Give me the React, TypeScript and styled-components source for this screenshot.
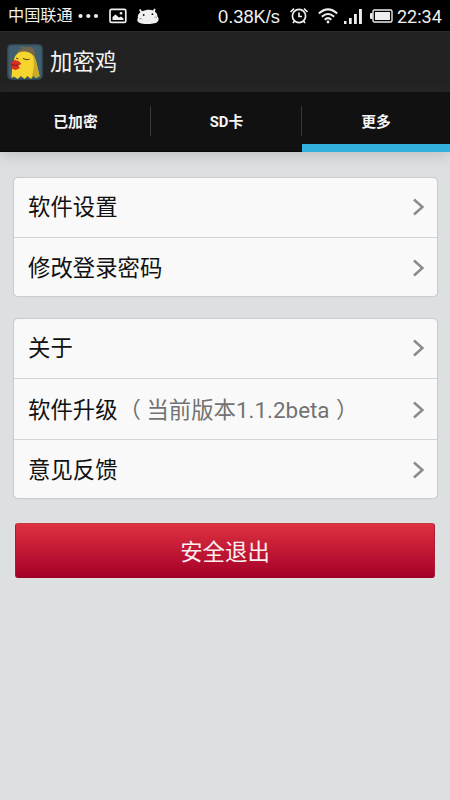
import React from "react";
import styled, { createGlobalStyle } from "styled-components";

const GlobalStyle = createGlobalStyle`
  * { box-sizing: border-box; }
  body {
    margin: 0;
    background: #dce0e1;
    font-family: Roboto, "Noto Sans CJK SC", sans-serif;
  }
`;

const Screen = styled.div`
  width: 450px;
  height: 800px;
  display: flex;
  flex-direction: column;
  background: #dce0e1;
  overflow: hidden;
`;

const StatusBar = styled.div`
  height: 31px;
  flex: none;
  display: flex;
  align-items: center;
  background: #000;
  color: #f0f0f0;
  padding: 1px 7px 0 8px;
`;

const Carrier = styled.span`
  font-size: 16.2px;
  line-height: 30px;
  white-space: nowrap;
  width: 69.5px;
`;

const StatusIcon = styled.svg<{ $gap: number }>`
  flex: none;
  display: block;
  margin-right: ${(p) => p.$gap}px;
`;

const Speed = styled.span`
  margin-left: auto;
  margin-right: 9px;
  font-family: "Liberation Sans", sans-serif;
  font-size: 18.3px;
  line-height: 30px;
  padding-top: 1px;
  white-space: nowrap;
`;

const Clock = styled.span`
  font-size: 18px;
  line-height: 30px;
  padding-top: 1px;
  width: 46px;
  white-space: nowrap;
`;

const TitleBar = styled.header`
  height: 61px;
  flex: none;
  display: flex;
  align-items: center;
  gap: 7px;
  padding-left: 7px;
  background: #222;
  border-top: 1px solid #2b2b2b;
`;

const Title = styled.h1`
  margin: 0;
  font-size: 22.4px;
  font-weight: 400;
  line-height: 30px;
  color: #f3f3f3;
`;

const TabBar = styled.nav`
  height: 60px;
  flex: none;
  display: grid;
  grid-template-columns: 151px 151px 148px;
  background: #111;
  border-bottom: 1px solid #08080a;
  box-shadow: 0 2px 14px rgba(90, 80, 90, 0.25);
`;

const Tab = styled.div<{ $active?: boolean }>`
  display: flex;
  align-items: center;
  justify-content: center;
  position: relative;
  height: ${(p) => (p.$active ? 60 : 59)}px;
  padding-top: ${(p) => (p.$active ? 5 : 0)}px;
  padding-bottom: ${(p) => (p.$active ? 0 : 2)}px;
  border-bottom: ${(p) => (p.$active ? "8px solid #33b0dc" : "none")};
  color: #f5f5f5;
  font-size: 14.8px;
  font-weight: 700;

  &:not(:last-child)::after {
    content: "";
    position: absolute;
    right: 0;
    top: 14px;
    width: 1px;
    height: 30px;
    background: #383838;
  }
`;

const Content = styled.main`
  display: flex;
  flex-direction: column;
  padding: 25px 12px 0 13px;
`;

const Card = styled.section`
  background: #f9f9f9;
  border: 1px solid #c9cdcf;
  border-radius: 5px;
  box-shadow: 0 0 1px #c5cacc;
  margin-bottom: 21px;
`;

const Row = styled.div<{ $height: number }>`
  height: ${(p) => p.$height}px;
  display: flex;
  align-items: center;
  justify-content: space-between;
  padding: 0 12px 0 14px;

  & + & {
    border-top: 1px solid #d2d5d7;
    padding-top: 2px;
  }

  &:first-child {
    padding-bottom: 1px;
  }
`;

const Label = styled.span`
  font-size: 22.4px;
  line-height: 32px;
  color: #111;
  white-space: nowrap;
`;

const Version = styled.span`
  color: #727272;
`;

const Paren = styled.span<{ $before: number; $after: number }>`
  margin-left: ${(p) => p.$before}px;
  margin-right: ${(p) => p.$after}px;
`;

const ExitButton = styled.button`
  margin: 3px 3px 0 2px;
  height: 55px;
  border: 1px solid #a81c35;
  border-top-color: #c23a48;
  border-bottom-color: #950026;
  border-radius: 3px;
  padding: 2px 0 0;
  background: linear-gradient(#de3140, #a50029);
  box-shadow: 0 0 1px 1px rgba(238, 222, 222, 0.6);
  color: #fbeff1;
  font-family: inherit;
  font-size: 22.4px;
  line-height: 32px;
`;

const Arrow = () => (
  <svg width="13" height="20" viewBox="0 0 13 20" fill="none">
    <path d="M2 2.5 L10.4 10 L2 17.5" stroke="#8b8b8b" strokeWidth="2.5" />
  </svg>
);

const DuckIcon = () => (
  <svg width="36" height="36" viewBox="0 0 36 36">
    <rect x="0.5" y="0.5" width="35" height="35" rx="4" fill="#40606f" />
    <rect x="1" y="1" width="34" height="34" rx="4" fill="none" stroke="#304a56" />
    <path d="M10 11 L11 6.5 L15 5 L13.5 1.5 L18 3.5 L24 3 L27.5 6.5 L28 13 L20 12 Z" fill="#77684a" />
    <path
      d="M7 16 C8 10 12 7 18 7.5 C25 8 28.5 13 29.5 19 L32.5 32 L29 34 L26.5 31.5 L24 35 L20.5 32 L17.5 35 L14 32 L10.5 35 L7 32.5 L4.5 34 L5 26 Z"
      fill="#f5d52e"
    />
    <path d="M26 12 C28.5 15 30 20 32.5 32 L29 34 L26.5 31.5 L24 35 C27 27 27.5 18 26 12Z" fill="#c9ab28" />
    <path d="M16 14.3 Q19 16.5 22.5 15 M9 14 L11.5 15" fill="none" stroke="#6b5319" strokeWidth="1.3" />
    <path d="M7 16 L11.5 17 L14.5 20 L11 21.5 L13 24 L8.5 26 L3.5 24 L6 21.5 L2.5 20.5 Z" fill="#d92c23" />
    <path d="M4 21 L11.5 21.3" fill="none" stroke="#73221b" strokeWidth="1" />
  </svg>
);

const groups: { label: string; version?: string; height: number }[][] = [
  [
    { label: "软件设置", height: 59 },
    { label: "修改登录密码", height: 59 },
  ],
  [
    { label: "关于", height: 59 },
    { label: "软件升级", version: "1.1.2beta", height: 61 },
    { label: "意见反馈", height: 59 },
  ],
];

export default function App() {
  return (
    <Screen>
      <GlobalStyle />
      <StatusBar>
        <Carrier>中国联通</Carrier>
        <StatusIcon $gap={10} width="21" height="6" viewBox="0 0 21 6" fill="#eee">
          <circle cx="2.5" cy="3" r="2.1" />
          <circle cx="10.3" cy="3" r="2.1" />
          <circle cx="18" cy="3" r="2.1" />
        </StatusIcon>
        <StatusIcon $gap={10} width="18" height="16" viewBox="0 0 18 16">
          <rect x="1" y="1.4" width="15.8" height="13" rx="1.5" fill="none" stroke="#eee" strokeWidth="1.7" />
          <path d="M3.5 12 V9 L6.5 6.5 L10 9.5 L12 8.5 L14.5 10.5 V12 Z" fill="#eee" />
          <circle cx="12" cy="5.3" r="1.3" fill="#eee" />
        </StatusIcon>
        <StatusIcon $gap={0} width="22" height="17" viewBox="0 0 22 17">
          <path
            d="M3.4 1 L5 3.3 C8.5 1.5 13.4 1.3 16 2.4 L17.2 0.6 L18.5 1.2 L17.9 3.8 C20 5 20.5 7 20.4 8.5 C22 9.7 22 12.5 20.4 14 C17.5 16.4 6 16.8 3 15 C0.5 14.3 -0.5 11.7 0.9 9.9 C0.4 7.5 1.5 5.5 3.3 4.2 L2 1.8 Z"
            fill="#f0f0f0"
          />
          <circle cx="6.7" cy="7" r="0.9" fill="#111" />
          <circle cx="15.4" cy="6.2" r="0.9" fill="#111" />
          <path d="M2.2 11 Q4.5 9.5 5 11.5 M17.5 9.5 Q18.5 8.5 20 9.5" fill="none" stroke="#777" strokeWidth="0.7" />
        </StatusIcon>
        <Speed>0.38K/s</Speed>
        <StatusIcon $gap={9} width="20" height="18" viewBox="0 0 20 18" fill="none" stroke="#eee" strokeWidth="1.7">
          <circle cx="10" cy="9" r="6.6" />
          <path d="M10 5.5 V9.5 H13 M1.5 5 L5 1.7 M18.5 5 L15 1.7 M5.5 14 L4 16 M14.5 14 L16 16" />
        </StatusIcon>
        <StatusIcon $gap={6} width="20" height="16" viewBox="0 0 20 16" fill="none" stroke="#eee" strokeWidth="2">
          <path d="M0.8 5.5 Q10 -2.7 19.2 5.5 M3.8 8.8 Q10 3.2 16.2 8.8 M6.7 11.7 Q10 8.5 13.3 11.7" />
          <circle cx="10" cy="14" r="1.4" fill="#eee" stroke="none" />
        </StatusIcon>
        <StatusIcon $gap={8} width="18" height="15" viewBox="0 0 18 15" fill="#eee">
          <rect x="0" y="12" width="2.5" height="3" />
          <rect x="5" y="9" width="2.7" height="6" />
          <rect x="10" y="5" width="2.8" height="10" />
          <rect x="15" y="0" width="2.9" height="15" />
        </StatusIcon>
        <StatusIcon $gap={4} width="23" height="14" viewBox="0 0 23 14">
          <rect x="3" y="1" width="19" height="12" rx="1.5" fill="none" stroke="#eee" strokeWidth="1.4" />
          <rect x="5" y="3" width="15" height="8" fill="#eee" />
          <rect x="0" y="4" width="2.5" height="6" rx="1" fill="#eee" />
        </StatusIcon>
        <Clock>22:34</Clock>
      </StatusBar>
      <TitleBar>
        <DuckIcon />
        <Title>加密鸡</Title>
      </TitleBar>
      <TabBar>
        <Tab>已加密</Tab>
        <Tab>SD卡</Tab>
        <Tab $active>更多</Tab>
      </TabBar>
      <Content>
        {groups.map((rows, g) => (
          <Card key={g}>
            {rows.map((row) => (
              <Row key={row.label} $height={row.height}>
                <Label>
                  {row.label}
                  {row.version && (
                    <Version>
                      <Paren $before={1} $after={5.5}>（</Paren>
                      当前版本{row.version}
                      <Paren $before={6.5} $after={0}>）</Paren>
                    </Version>
                  )}
                </Label>
                <Arrow />
              </Row>
            ))}
          </Card>
        ))}
        <ExitButton>安全退出</ExitButton>
      </Content>
    </Screen>
  );
}
